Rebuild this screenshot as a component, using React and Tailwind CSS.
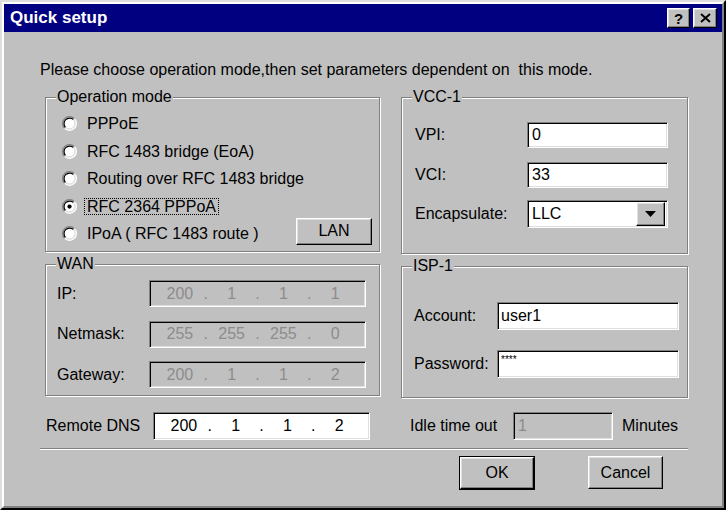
import React from "react";

const raised =
  "border border-t-white border-l-white border-r-black border-b-black shadow-[inset_-1px_-1px_0_#808080,inset_1px_1px_0_#dfdfdf]";
const sunken =
  "border border-t-[#808080] border-l-[#808080] border-b-white border-r-white shadow-[inset_1px_1px_0_#000,inset_-1px_-1px_0_#dfdfdf]";
const etched =
  "border border-[#808080] shadow-[inset_1px_1px_0_#fff,1px_1px_0_#fff]";

function Radio({ checked }) {
  return (
    <svg width="15" height="15" viewBox="0 0 12 12" className="shrink-0">
      <circle cx="6" cy="6" r="5" fill="#fff" />
      <path d="M2.11 9.89 A5.5 5.5 0 0 1 9.89 2.11" fill="none" stroke="#808080" strokeWidth="1" />
      <path d="M9.89 2.11 A5.5 5.5 0 0 1 2.11 9.89" fill="none" stroke="#fff" strokeWidth="1" />
      <path d="M2.82 9.18 A4.5 4.5 0 0 1 9.18 2.82" fill="none" stroke="#000" strokeWidth="1" />
      <path d="M9.18 2.82 A4.5 4.5 0 0 1 2.82 9.18" fill="none" stroke="#dfdfdf" strokeWidth="1" />
      {checked && <circle cx="6" cy="6" r="1.7" fill="#000" />}
    </svg>
  );
}

// etched group box; the inner div holds the padding so the legend stays put
function Group({ title, className, inner, children }) {
  return (
    <fieldset className={`${etched} ${className}`}>
      <legend className="ml-[10px] px-[1px] leading-[16px] bg-[#c0c0c0]">{title}</legend>
      <div className={inner}>{children}</div>
    </fieldset>
  );
}

function IpField({ values, disabled, className }) {
  const color = disabled ? "text-[#8c8c8c]" : "text-black";
  const bg = disabled ? "bg-[#c0c0c0]" : "bg-white";
  return (
    <div className={`${sunken} ${bg} ${color} flex items-center px-[8px] ${className}`}>
      {values.map((v, i) => (
        <React.Fragment key={i}>
          {i > 0 && <span className="w-[8px] text-center">.</span>}
          <span className="flex-1 text-center">{v}</span>
        </React.Fragment>
      ))}
    </div>
  );
}

export default function App() {
  const modes = [
    "PPPoE",
    "RFC 1483 bridge (EoA)",
    "Routing over RFC 1483 bridge",
    "RFC 2364 PPPoA",
    "IPoA ( RFC 1483 route )",
  ];

  return (
    <div className="w-[726px] h-[510px] bg-[#c0c0c0] border-2 border-t-[#dfdfdf] border-l-[#dfdfdf] border-r-black border-b-black font-['Liberation_Sans',Arial,sans-serif] text-[16px] text-black">
      <div className="h-full flex flex-col border-2 border-t-white border-l-white border-r-[#808080] border-b-[#808080]">
        {/* TITLE BAR */}
        <div className="h-[28px] shrink-0 bg-[#000080] flex items-center justify-between pl-[6px] pr-[5px]">
          <span className="text-white font-bold text-[17px]">Quick setup</span>
          <div className="flex gap-[3px]">
            <div className={`${raised} bg-[#c0c0c0] w-[23px] h-[20px] flex items-center justify-center font-bold text-[15px] leading-none`}>?</div>
            <div className={`${raised} bg-[#c0c0c0] w-[24px] h-[20px] flex items-center justify-center`}>
              <svg width="11" height="10" viewBox="0 0 11 10">
                <path d="M1 1 L10 9 M10 1 L1 9" stroke="#000" strokeWidth="2" />
              </svg>
            </div>
          </div>
        </div>

        {/* BODY */}
        <div className="flex-1 pl-[36px] pt-[30px]">
          <p className="leading-[16px] whitespace-pre">
            Please choose operation mode,then set parameters dependent on  this mode.
          </p>

          <div className="ml-[5px] mt-[11px] grid grid-cols-[335px_287px] gap-x-[21px] gap-y-[2px]">
            {/* OPERATION MODE */}
            <Group title="Operation mode" className="h-[163px]" inner="pl-[16px] pr-[7px] pt-[5px]">
              {modes.map((m, i) => (
                <div key={m} className="h-[27.5px] flex items-center">
                  <Radio checked={i === 3} />
                  <span
                    className={`ml-[7px] px-[2px] leading-[15px] border border-dotted ${
                      i === 3 ? "border-black" : "border-transparent"
                    }`}
                  >
                    {m}
                  </span>
                  {i === 4 && (
                    <div className={`${raised} bg-[#c0c0c0] ml-auto -mt-[5px] w-[76px] h-[27px] flex items-center justify-center`}>
                      LAN
                    </div>
                  )}
                </div>
              ))}
            </Group>

            {/* VCC-1 */}
            <Group title="VCC-1" className="h-[165px]" inner="pl-[13px] pt-[17px]">
              <div className="flex items-center h-[26px]">
                <span className="w-[112px]">VPI:</span>
                <div className={`${sunken} bg-white w-[141px] h-full flex items-center pl-[4px]`}>0</div>
              </div>
              <div className="flex items-center h-[26px] mt-[14px]">
                <span className="w-[112px]">VCI:</span>
                <div className={`${sunken} bg-white w-[141px] h-full flex items-center pl-[4px]`}>33</div>
              </div>
              <div className="flex items-center h-[28px] mt-[12px]">
                <span className="w-[112px]">Encapsulate:</span>
                <div className={`${sunken} bg-white w-[141px] h-full flex items-center justify-between pl-[4px] pr-[2px]`}>
                  <span>LLC</span>
                  <div className={`${raised} bg-[#c0c0c0] w-[29px] h-[24px] flex items-center justify-center`}>
                    <svg width="11" height="6" viewBox="0 0 11 6">
                      <path d="M0 0 L11 0 L5.5 6 Z" fill="#000" />
                    </svg>
                  </div>
                </div>
              </div>
            </Group>

            {/* WAN */}
            <Group title="WAN" className="h-[140px]" inner="pl-[11px] pt-[8px]">
              {[
                ["IP:", ["200", "1", "1", "1"]],
                ["Netmask:", ["255", "255", "255", "0"]],
                ["Gateway:", ["200", "1", "1", "2"]],
              ].map(([label, vals], i) => (
                <div key={label} className={`flex items-center h-[27px] ${i > 0 ? "mt-[13.5px]" : ""}`}>
                  <span className="w-[92px]">{label}</span>
                  <IpField values={vals} disabled className="w-[217px] h-full" />
                </div>
              ))}
            </Group>

            {/* ISP-1 */}
            <Group title="ISP-1" className="h-[140px] mt-[2px]" inner="pl-[12px] pt-[28px]">
              <div className="flex items-center h-[28px]">
                <span className="w-[83px]">Account:</span>
                <div className={`${sunken} bg-white w-[182px] h-full flex items-center pl-[3px]`}>user1</div>
              </div>
              <div className="flex items-center h-[28px] mt-[20px]">
                <span className="w-[83px]">Password:</span>
                <div className={`${sunken} bg-white w-[182px] h-full flex items-start pt-[4px] pl-[3px] text-[10px] leading-none`}>
                  ****
                </div>
              </div>
            </Group>
          </div>

          {/* DNS / IDLE */}
          <div className="ml-[6px] mt-[14px] flex items-center h-[28px]">
            <span className="w-[107px]">Remote DNS</span>
            <IpField values={["200", "1", "1", "2"]} className="w-[217px] h-full" />
            <span className="ml-[40px] w-[103px]">Idle time out</span>
            <div className={`${sunken} bg-[#c0c0c0] text-[#8c8c8c] w-[100px] h-full flex items-center pl-[4px]`}>1</div>
            <span className="ml-[9px]">Minutes</span>
          </div>

          {/* SEPARATOR */}
          <div className="mt-[8px] w-[648px] border-t border-t-[#808080] border-b border-b-white" />

          {/* BUTTONS */}
          <div className="mt-[6px] w-[648px] flex justify-end pr-[25px] gap-[53px]">
            <div className="border border-black">
              <div className={`${raised} bg-[#c0c0c0] w-[74px] h-[32px] flex items-center justify-center`}>OK</div>
            </div>
            <div className={`${raised} bg-[#c0c0c0] w-[75px] h-[33px] flex items-center justify-center`}>Cancel</div>
          </div>
        </div>
      </div>
    </div>
  );
}
